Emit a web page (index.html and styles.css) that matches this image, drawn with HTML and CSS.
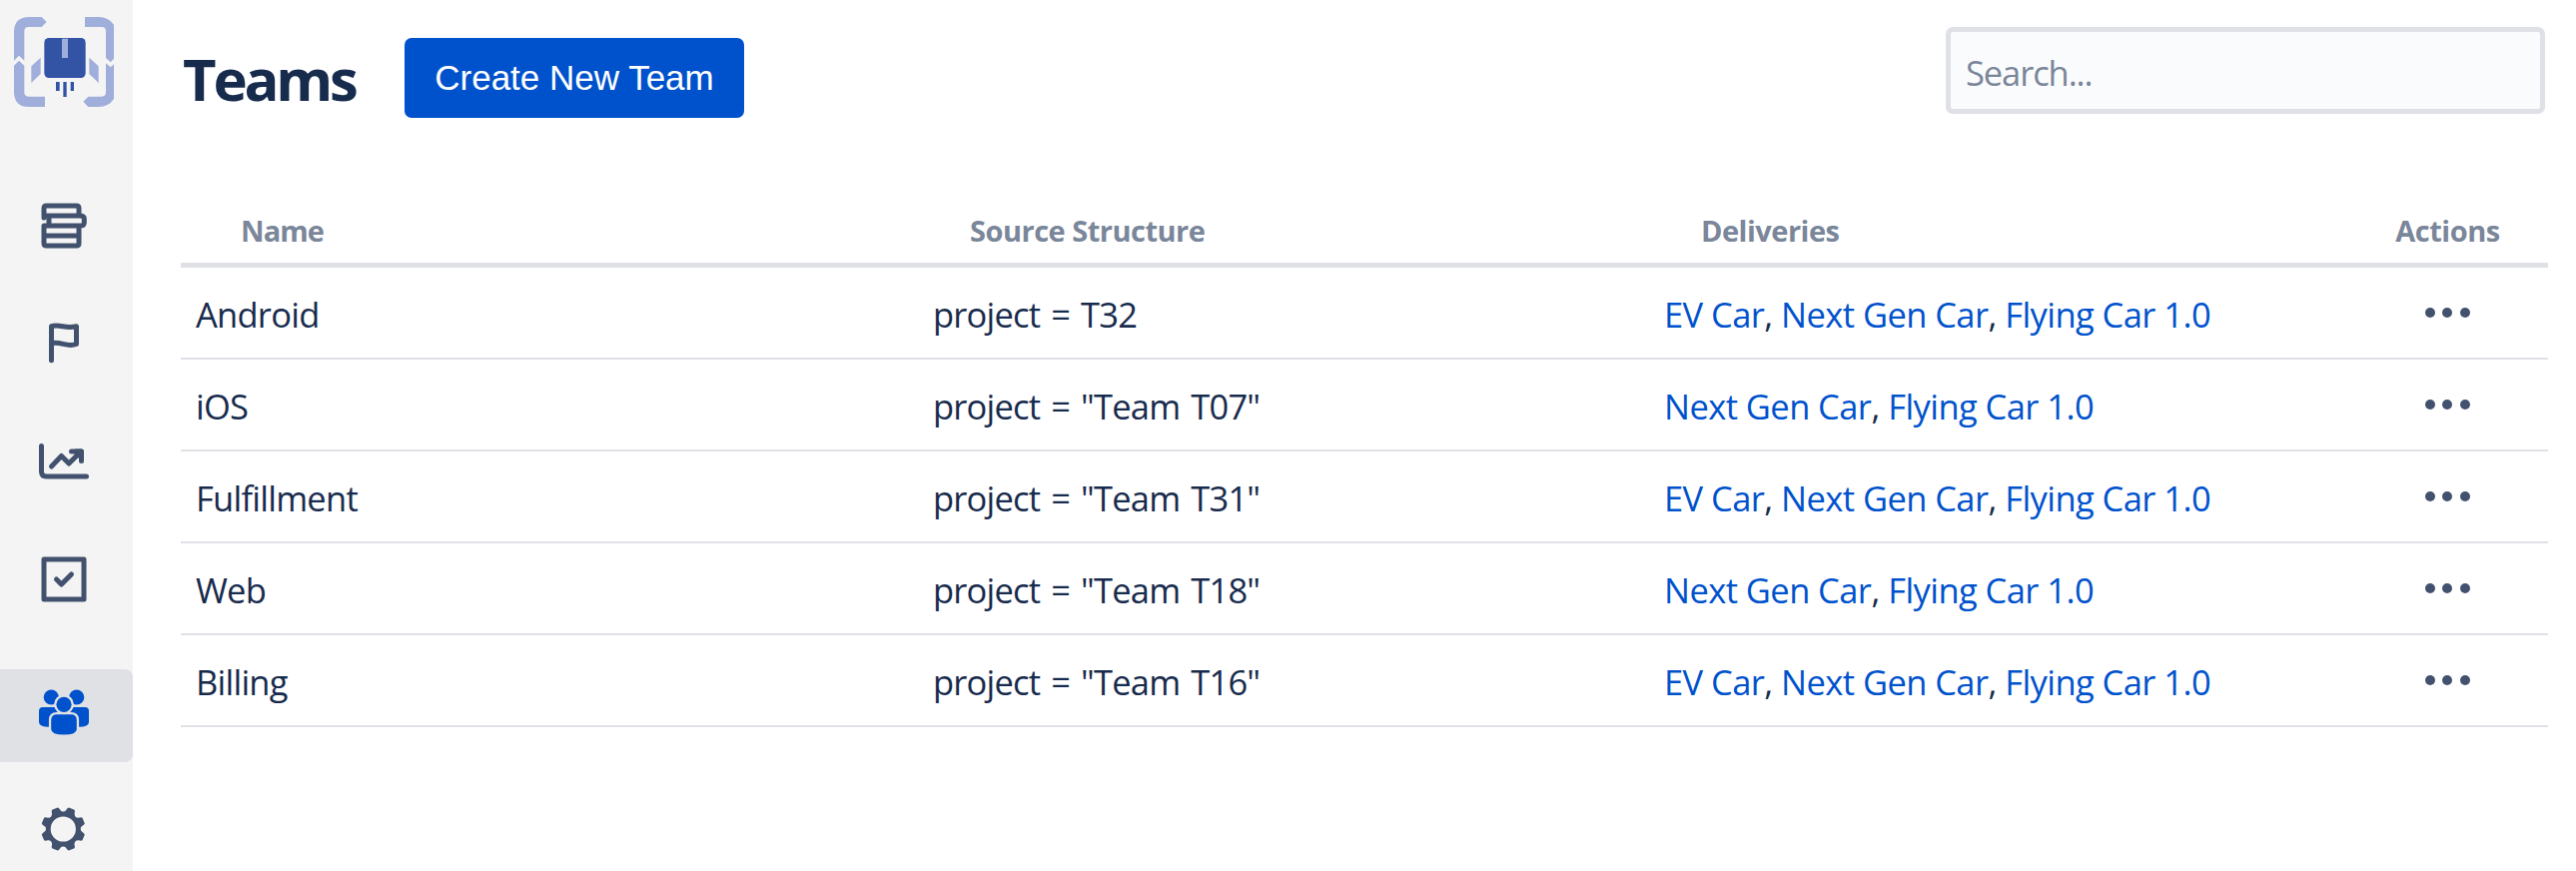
FILE: index.html
```
<!DOCTYPE html>
<html lang="en">
<head>
<meta charset="utf-8">
<title>Teams</title>
<link rel="stylesheet" href="styles.css">
</head>
<body>
<aside class="sidebar">
  <a class="logo" href="#">
    <svg viewBox="0 0 399 390">
      <g fill="#a0aedb">
        <path d="M88 51H125L140 66L125 81H86Q73 81 73 94V182L57 167L42 182V97Q42 51 88 51Z"/>
        <path d="M255 51H296Q326 51 342 74V176L332 187L318 174V94Q318 81 305 81H255Z"/>
        <path d="M42 197L57 182L73 197V277Q73 290 86 290H135V321H88Q42 321 42 275Z"/>
        <path d="M318 190L332 202L342 193V297Q326 321 296 321H265L250 305L265 290H305Q318 290 318 277Z"/>
        <path d="M94 199L122 173V222L94 249Z"/>
        <path d="M296 199L268 173V222L296 249Z"/>
      </g>
      <rect x="133" y="114" width="124" height="120" rx="14" fill="#3353a4"/>
      <path d="M186 116H204V174H186Z" fill="#a0aedb"/>
      <path d="M168 246H179V273H168ZM190 246H200V291H190ZM212 246H222V273H212Z" fill="#3353a4"/>
    </svg>
  </a>
  <nav class="nav">
    <a class="nav-item" href="#">
      <svg class="line" viewBox="0 0 133 93">
        <path d="M44 38V28.5Q44 26 46.5 26H76.5Q79 26 79 28.5V36M44 36H80Q84.3 36 84.3 39V43Q84.3 46 80 46H44M49 36V46M44 46V63.5Q44 66 46.5 66H76.5Q79 66 79 63.5V46M44 56H79"/>
      </svg>
    </a>
    <a class="nav-item" href="#">
      <svg class="line" viewBox="0 0 133 93">
        <path d="M51.5 62.7V28.7C60 26 66 32 76.5 28.7V46.5C67 50 61 43.5 51.5 45.7"/>
      </svg>
    </a>
    <a class="nav-item" href="#">
      <svg class="line" viewBox="0 0 133 93">
        <path d="M41.5 30.5V56Q41.5 61 46.5 61H86.5M51.5 51L61.5 40.5L69 48L81 36M71.5 36H81.5V45.5"/>
        <path d="M76 36H81.5V42Z"/>
      </svg>
    </a>
    <a class="nav-item" href="#">
      <svg class="line" viewBox="0 0 133 93">
        <rect x="44" y="26" width="40" height="40"/>
        <path d="M56.5 46L61.5 51L71.5 41"/>
      </svg>
    </a>
    <a class="nav-item active" href="#">
      <svg viewBox="0 0 133 93">
        <g fill="#0052cc">
          <circle cx="51.3" cy="28" r="7.6"/>
          <circle cx="76.7" cy="28" r="7.6"/>
          <path d="M43 38H60V57.7H49Q39 57.7 39 53V42Q39 38 43 38Z"/>
          <path d="M85 38H68V57.7H79Q89 57.7 89 53V42Q89 38 85 38Z"/>
        </g>
        <g fill="#0052cc" stroke="#dfe1e5" stroke-width="4.6" paint-order="stroke">
          <path d="M57 45.2H71Q76.8 45.2 76.8 51V60Q76.8 65.5 64 65.5Q51.2 65.5 51.2 60V51Q51.2 45.2 57 45.2Z"/>
          <circle cx="64" cy="35.3" r="7.6"/>
        </g>
      </svg>
    </a>
    <a class="nav-item" href="#">
      <svg viewBox="0 0 133 93">
        <defs><path id="tooth" d="M-7 -15Q-4.2 -17.5 -3.9 -21L-3 -22H3L3.9 -21Q4.2 -17.5 7 -15Z"/></defs>
        <g transform="translate(63.3 46)" fill="#42526e">
          <circle r="15" fill="none" stroke="#42526e" stroke-width="4.8"/>
          <use href="#tooth" transform="rotate(22.5)"/>
          <use href="#tooth" transform="rotate(67.5)"/>
          <use href="#tooth" transform="rotate(112.5)"/>
          <use href="#tooth" transform="rotate(157.5)"/>
          <use href="#tooth" transform="rotate(202.5)"/>
          <use href="#tooth" transform="rotate(247.5)"/>
          <use href="#tooth" transform="rotate(292.5)"/>
          <use href="#tooth" transform="rotate(337.5)"/>
        </g>
      </svg>
    </a>
  </nav>
</aside>
<main class="content">
  <header class="header">
    <h1 class="title">Teams</h1>
    <button class="btn-create" type="button">Create New Team</button>
    <input class="search" type="text" placeholder="Search...">
  </header>
  <table class="teams">
    <thead>
      <tr>
        <th class="col-name">Name</th>
        <th class="col-source">Source Structure</th>
        <th class="col-deliveries">Deliveries</th>
        <th class="col-actions">Actions</th>
      </tr>
    </thead>
    <tbody>
      <tr>
        <td class="name">Android</td>
        <td class="source">project = T32</td>
        <td class="deliveries"><a href="#">EV Car</a>, <a href="#">Next Gen Car</a>, <a href="#">Flying Car 1.0</a></td>
        <td class="actions"><i></i><i></i><i></i></td>
      </tr>
      <tr>
        <td class="name">iOS</td>
        <td class="source">project = "Team T07"</td>
        <td class="deliveries"><a href="#">Next Gen Car</a>, <a href="#">Flying Car 1.0</a></td>
        <td class="actions"><i></i><i></i><i></i></td>
      </tr>
      <tr>
        <td class="name">Fulfillment</td>
        <td class="source">project = "Team T31"</td>
        <td class="deliveries"><a href="#">EV Car</a>, <a href="#">Next Gen Car</a>, <a href="#">Flying Car 1.0</a></td>
        <td class="actions"><i></i><i></i><i></i></td>
      </tr>
      <tr>
        <td class="name">Web</td>
        <td class="source">project = "Team T18"</td>
        <td class="deliveries"><a href="#">Next Gen Car</a>, <a href="#">Flying Car 1.0</a></td>
        <td class="actions"><i></i><i></i><i></i></td>
      </tr>
      <tr>
        <td class="name">Billing</td>
        <td class="source">project = "Team T16"</td>
        <td class="deliveries"><a href="#">EV Car</a>, <a href="#">Next Gen Car</a>, <a href="#">Flying Car 1.0</a></td>
        <td class="actions"><i></i><i></i><i></i></td>
      </tr>
    </tbody>
  </table>
</main>
</body>
</html>
```
FILE: styles.css
```
* {
	box-sizing:border-box;
}
body {
	display:flex;
	height:872px;
	margin:0;
	overflow:hidden;
	color:#172b4d;
	background:#fff;
	font-family:"Open Sans", "Noto Sans", sans-serif;
}
a {
	color:#0052cc;
	text-decoration:none;
}
.sidebar {
	flex:none;
	width:133px;
	background:#f4f4f4;
}
.sidebar a, .sidebar svg {
	display:block;
	width:133px;
}
.logo {
	height:130px;
}
.nav {
	display:flex;
	flex-direction:column;
	gap:25px;
	padding-top:50px;
}
.nav-item {
	flex:none;
	height:93px;
	border-radius:0 8px 8px 0;
}
.nav-item.active {
	margin:18px 0 -4px;
	background:#dfe1e5;
}
.line {
	fill:none;
	stroke:#42526e;
	stroke-width:5;
	stroke-linecap:round;
	stroke-linejoin:round;
}
.content {
	flex:1;
	padding:27px 28px 0 48px;
}
.header {
	display:flex;
	align-items:flex-start;
	height:167px;
	padding-right:3px;
}
.title {
	width:224px;
	margin:12px 0 0 2px;
	font-size:58px;
	font-weight:700;
	letter-spacing:-3.2px;
	line-height:80px;
	white-space:nowrap;
}
.btn-create {
	width:340px;
	height:80px;
	margin:11px 0 0 -2px;
	padding:0;
	border:0;
	border-radius:7px;
	color:#fff;
	background:#0052cc;
	font:35px/80px "Liberation Sans", Arial, sans-serif;
}
.search {
	width:600px;
	height:87px;
	margin-left:auto;
	padding:3px 15px 0;
	border:5px solid #dfe1e6;
	border-radius:7px;
	color:#172b4d;
	background:#fafbfc;
	font:34.5px "Open Sans", "Noto Sans", sans-serif;
	letter-spacing:-1.1px;
}
.search::placeholder {
	color:#7a869a;
}
.teams {
	width:2370px;
	border-collapse:separate;
	border-spacing:0;
	table-layout:fixed;
}
.teams th {
	height:74px;
	padding:4px 0 0 60px;
	border-bottom:5px solid #dfe1e6;
	color:#7a869a;
	font-size:29px;
	font-weight:700;
	letter-spacing:-.5px;
	line-height:65px;
	text-align:left;
}
.teams td {
	height:92px;
	padding:3px 0 0 15px;
	border-bottom:2px solid #dfe1e6;
	font-size:34.5px;
	line-height:87px;
	white-space:nowrap;
}
.teams .col-name {
	width:738px;
	letter-spacing:-.9px;
}
.teams .col-source {
	width:732px;
	padding-left:52px;
}
.teams .col-deliveries {
	width:700px;
	padding-left:52px;
}
.teams .col-actions {
	padding-left:0;
	padding-right:1px;
	text-align:center;
}
.name {
	letter-spacing:-.75px;
}
.source {
	letter-spacing:-.8px;
	word-spacing:2.8px;
}
.deliveries {
	letter-spacing:-.57px;
}
.teams .actions {
	padding:0 2px 0 0;
	font-size:0;
	text-align:center;
}
.actions i {
	display:inline-block;
	width:10px;
	height:10px;
	margin:0 3.75px;
	border-radius:50%;
	background:#42526e;
	vertical-align:middle;
}
```
